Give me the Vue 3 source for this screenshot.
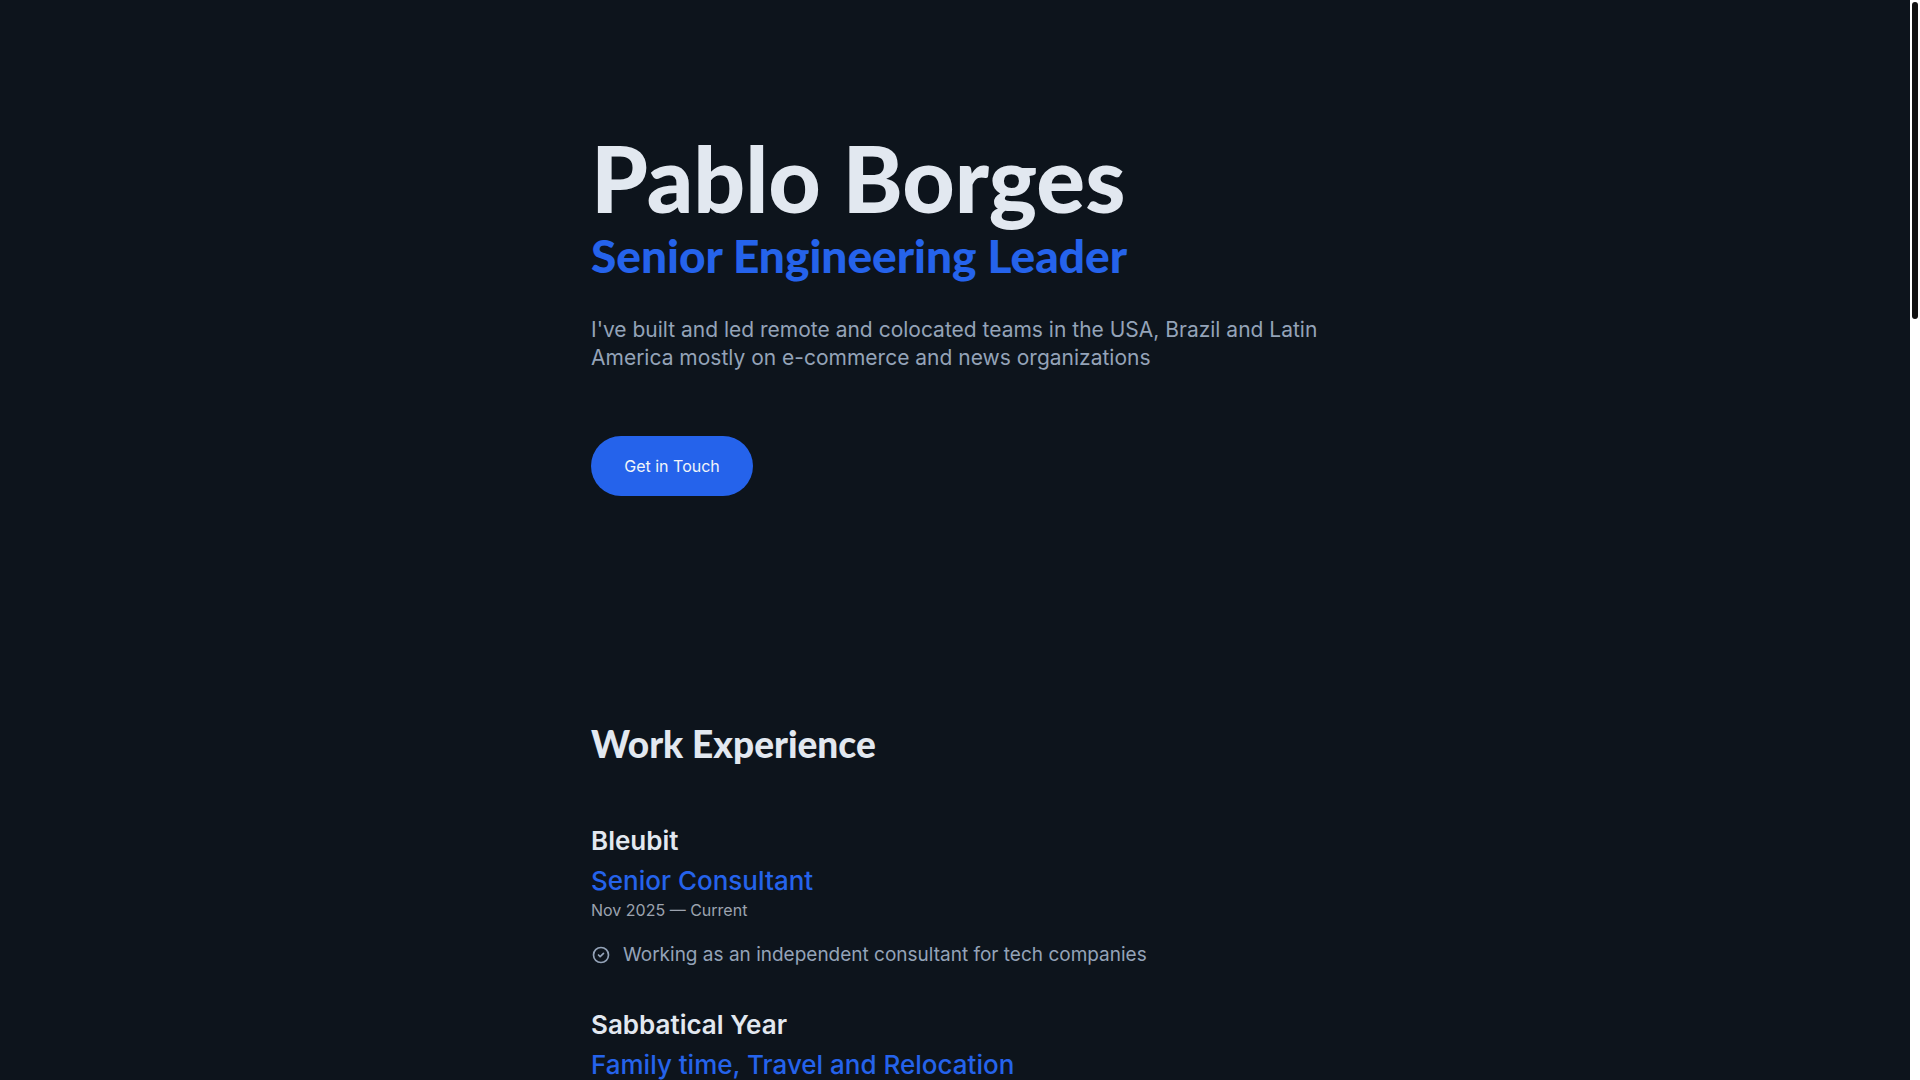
<script setup>
const jobs = [
  {
    company: 'Bleubit',
    role: 'Senior Consultant',
    period: 'Nov 2025 — Current',
    highlights: ['Working as an independent consultant for tech companies'],
  },
  {
    company: 'Sabbatical Year',
    role: 'Family time, Travel and Relocation',
    period: '',
    highlights: [],
  },
]
</script>

<template>
  <div class="viewport">
    <main class="page">
      <header class="hero">
        <h1>Pablo Borges</h1>
        <p class="headline">Senior Engineering Leader</p>
        <p class="intro">
          I've built and led remote and colocated teams in the USA, Brazil and Latin<br />
          America mostly on e-commerce and news organizations
        </p>
        <button type="button" class="contact">Get in Touch</button>
      </header>

      <section aria-labelledby="work-title">
        <h2 id="work-title">Work Experience</h2>
        <article v-for="job in jobs" :key="job.company" class="job">
          <h3>{{ job.company }}</h3>
          <p class="role">{{ job.role }}</p>
          <p v-if="job.period" class="period">{{ job.period }}</p>
          <ul v-if="job.highlights.length" class="highlights">
            <li v-for="item in job.highlights" :key="item">
              <svg viewBox="0 0 24 24" width="20" height="20" aria-hidden="true">
                <circle cx="12" cy="12" r="9" />
                <path d="M9 12l2 2l4 -4" />
              </svg>
              <span>{{ item }}</span>
            </li>
          </ul>
        </article>
      </section>
    </main>
    <div class="scroll-track" aria-hidden="true"><div class="scroll-thumb"></div></div>
  </div>
</template>

<style>
body {
  background: #0d141c;
}
</style>

<style scoped>
.viewport {
  display: flex;
  height: 100vh;
  overflow: hidden;
  background: #0d141c;
  color: #94a3b8;
  font-family: Inter, "Liberation Sans", sans-serif;
}

h1,
h2,
h3,
p,
ul {
  margin: 0;
  padding: 0;
}

.page {
  box-sizing: border-box;
  width: 100%;
  max-width: 768px;
  margin: 0 auto;
  padding: 130px 20px 0;
}

.hero {
  margin-bottom: 224px;
}

h1,
h2,
.headline {
  font-family: Lato, Inter, sans-serif;
  font-weight: 900;
}

h1 {
  color: #e2e8f0;
  font-size: 91px;
  line-height: 96px;
}

.headline {
  color: #2563eb;
  font-size: 46px;
  line-height: 60px;
}

.intro {
  margin-top: 30px;
  font-size: 21px;
  line-height: 28px;
  white-space: nowrap;
}

.contact {
  display: block;
  min-width: 162px;
  height: 60px;
  margin-top: 64px;
  padding: 0 32px;
  border: 0;
  border-radius: 30px;
  background: #2563eb;
  color: #f1f5f9;
  font-family: inherit;
  font-size: 16px;
  line-height: 24px;
  cursor: pointer;
}

h2 {
  margin-bottom: 53px;
  color: #e2e8f0;
  font-size: 37px;
  line-height: 48px;
}

.job {
  margin-bottom: 36px;
}

h3,
.role {
  font-size: 26px;
  font-weight: 600;
  line-height: 40px;
}

h3 {
  color: #e2e8f0;
}

.role {
  color: #2563eb;
  font-weight: 500;
}

.period {
  color: #9ca3af;
  font-size: 16px;
  line-height: 18px;
}

.highlights {
  margin-top: 22px;
  list-style: none;
}

.highlights li {
  display: flex;
  align-items: center;
  gap: 12px;
  font-size: 19px;
  line-height: 28px;
}

.highlights svg {
  flex: none;
  fill: none;
  stroke: currentColor;
  stroke-width: 2;
  stroke-linecap: round;
  stroke-linejoin: round;
}

.scroll-track {
  flex: none;
  box-sizing: border-box;
  width: 10px;
  padding: 2px;
  background: #fff;
}

.scroll-thumb {
  height: 29.5%;
  border-radius: 3px;
  background: #111;
}
</style>
